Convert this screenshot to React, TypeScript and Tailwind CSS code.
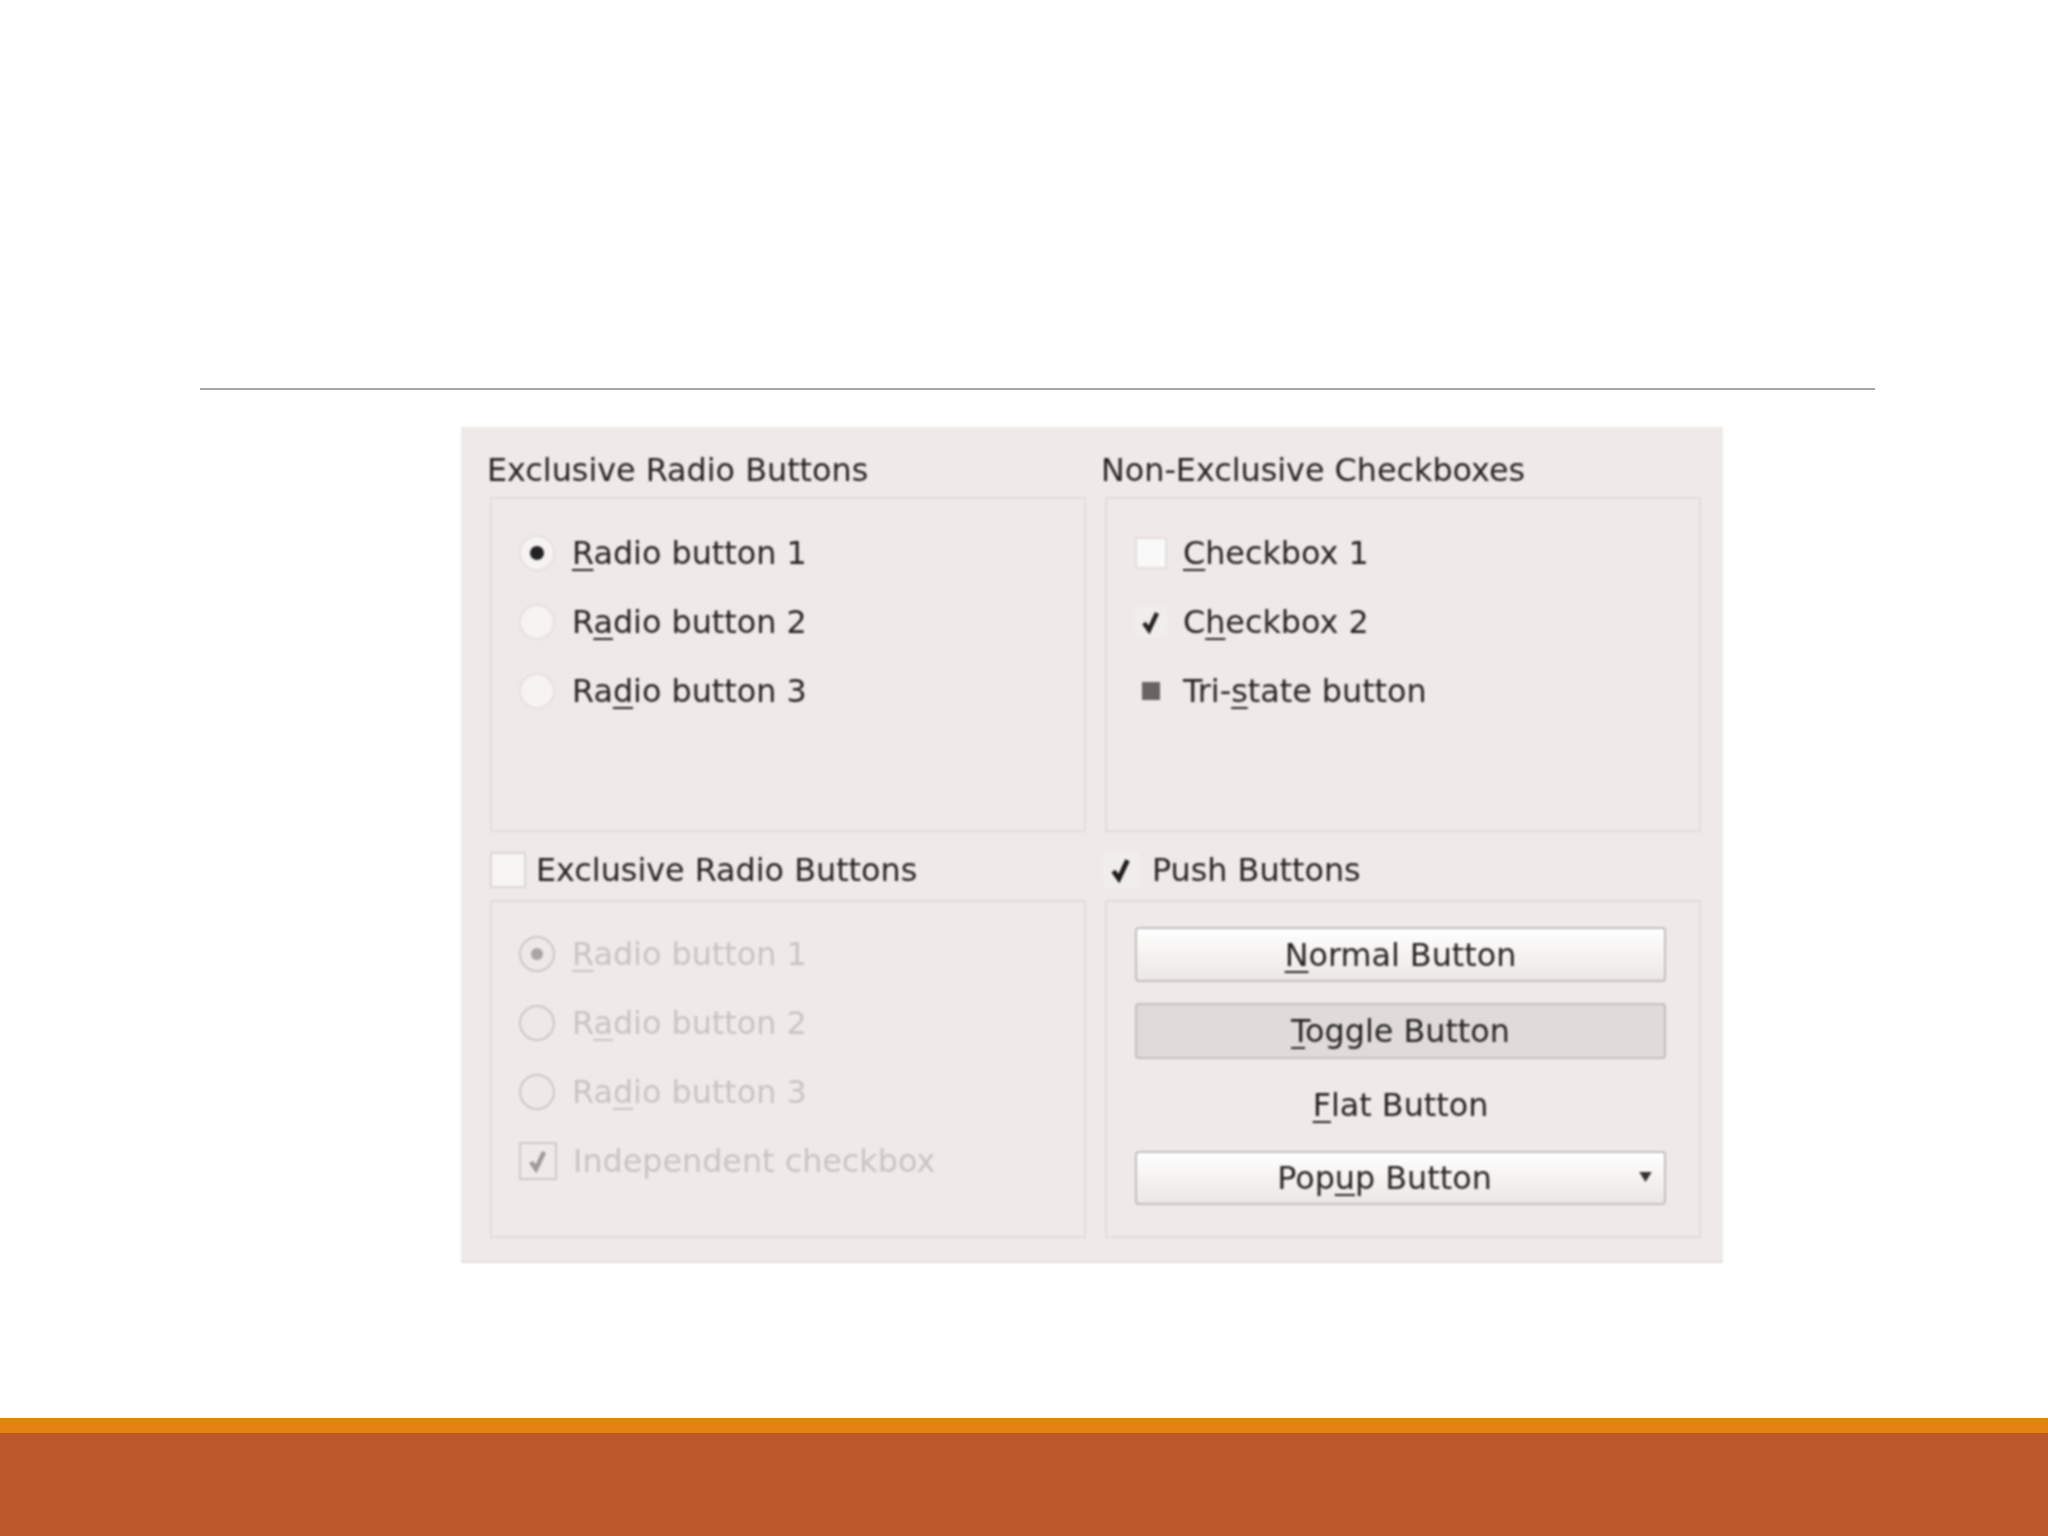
import { ReactNode } from "react";

function CheckMark({ className }: { className: string }) {
  return (
    <svg viewBox="0 0 20 24" className={className}>
      <path d="M3 13 L8 20 L16 3" fill="none" stroke="currentColor" strokeWidth="4.5" />
    </svg>
  );
}

function Radio({ checked, disabled }: { checked?: boolean; disabled?: boolean }) {
  return (
    <span
      className={`flex h-[36px] w-[36px] shrink-0 items-center justify-center rounded-full border-2 ${
        disabled ? "border-[#cdc8c5] bg-[#eee9e6]" : "border-[#e6e2df] bg-[#f6f3f2]"
      }`}
    >
      {checked && (
        <span className={`rounded-full ${disabled ? "h-[12px] w-[12px] bg-[#aaa5a3]" : "h-[14px] w-[14px] bg-[#222]"}`} />
      )}
    </span>
  );
}

function Row({ icon, gap, children }: { icon: ReactNode; gap: string; children: ReactNode }) {
  return (
    <div className={`flex h-[69px] items-center ${gap}`}>
      {icon}
      <span>{children}</span>
    </div>
  );
}

function Key({ children }: { children: string }) {
  return <span className="underline decoration-2 underline-offset-[5px]">{children}</span>;
}

function Frame({ className, children }: { className: string; children: ReactNode }) {
  return <div className={`border-2 border-[#e2dddb] ${className}`}>{children}</div>;
}

function PushButton({ children, className }: { children: ReactNode; className: string }) {
  return (
    <div className={`flex items-center justify-center rounded-[4px] border-2 border-[#c4bfbc] ${className}`}>
      {children}
    </div>
  );
}

export default function App() {
  return (
    <div className="flex h-[1536px] w-full flex-col bg-white font-['DejaVu_Sans',sans-serif]">
      <div className="ml-[200px] mt-[388px] h-[2px] w-[1675px] shrink-0 bg-[#a6a6a6]" />

      {/* Screenshot of the widget gallery */}
      <div className="ml-[461px] mt-[37px] h-[836px] w-[1262px] shrink-0 border-b-2 border-[#e4dfdc] bg-[#efe9e7] pl-[29px] text-[31.8px] leading-none text-[#262323] blur-[1.1px]">
        <div className="grid grid-cols-[596px_596px] gap-x-[19px]">
          {/* top left */}
          <div>
            <div className="-ml-[3px] flex h-[70px] items-center pt-[16px]">Exclusive Radio Buttons</div>
            <Frame className="h-[335px] pl-[27px] pt-[19px]">
              <Row gap="gap-[17px]" icon={<Radio checked />}>
                <Key>R</Key>adio button 1
              </Row>
              <Row gap="gap-[17px]" icon={<Radio />}>
                R<Key>a</Key>dio button 2
              </Row>
              <Row gap="gap-[17px]" icon={<Radio />}>
                Ra<Key>d</Key>io button 3
              </Row>
            </Frame>
          </div>

          {/* top right */}
          <div>
            <div className="-ml-[4px] flex h-[70px] items-center pt-[16px]">Non-Exclusive Checkboxes</div>
            <Frame className="h-[335px] pl-[28px] pt-[19px]">
              <Row gap="gap-[16px]" icon={<span className="h-[32px] w-[32px] shrink-0 border-2 border-[#e2dedb] bg-[#faf9f9]" />}>
                <Key>C</Key>heckbox 1
              </Row>
              <Row
                gap="gap-[16px]"
                icon={
                  <span className="flex h-[32px] w-[32px] shrink-0 items-center justify-center bg-[#f1edeb] text-[#222]">
                    <CheckMark className="h-[24px] w-[20px]" />
                  </span>
                }
              >
                C<Key>h</Key>eckbox 2
              </Row>
              <Row
                gap="gap-[16px]"
                icon={
                  <span className="flex h-[32px] w-[32px] shrink-0 items-center justify-center bg-[#efe9e7]">
                    <span className="h-[18px] w-[18px] bg-[#6b6262]" />
                  </span>
                }
              >
                Tri-<Key>s</Key>tate button
              </Row>
            </Frame>
          </div>

          {/* bottom left */}
          <div>
            <div className="flex h-[68px] items-center gap-[10px] pt-[8px]">
              <span className="h-[36px] w-[36px] shrink-0 border-2 border-[#dcd7d4] bg-[#f8f6f5]" />
              <span>Exclusive Radio Buttons</span>
            </div>
            <Frame className="h-[338px] pl-[27px] pt-[17px] text-[#c9c4c1]">
              <Row gap="gap-[17px]" icon={<Radio checked disabled />}>
                <Key>R</Key>adio button 1
              </Row>
              <Row gap="gap-[17px]" icon={<Radio disabled />}>
                R<Key>a</Key>dio button 2
              </Row>
              <Row gap="gap-[17px]" icon={<Radio disabled />}>
                Ra<Key>d</Key>io button 3
              </Row>
              <Row
                gap="gap-[16px]"
                icon={
                  <span className="flex h-[38px] w-[38px] shrink-0 items-center justify-center border-2 border-[#cfcac7] text-[#9f9a98]">
                    <CheckMark className="h-[24px] w-[20px]" />
                  </span>
                }
              >
                Independent checkbox
              </Row>
            </Frame>
          </div>

          {/* bottom right */}
          <div>
            <div className="-ml-[2px] flex h-[68px] items-center gap-[13px] pt-[8px]">
              <span className="flex h-[36px] w-[36px] shrink-0 items-center justify-center bg-[#f1edeb] text-[#1c1c1c]">
                <CheckMark className="h-[26px] w-[22px]" />
              </span>
              <span>Push Buttons</span>
            </div>
            <Frame className="flex h-[338px] flex-col gap-[21px] pl-[28px] pr-[33px] pt-[25px]">
              <PushButton className="h-[55px] bg-linear-to-b from-white to-[#ebe7e4]">
                <span>
                  <Key>N</Key>ormal Button
                </span>
              </PushButton>
              <PushButton className="h-[56px] bg-[#e0dbd8]">
                <span>
                  <Key>T</Key>oggle Button
                </span>
              </PushButton>
              <div className="flex h-[50px] items-center justify-center">
                <span>
                  <Key>F</Key>lat Button
                </span>
              </div>
              <PushButton className="relative h-[54px] bg-linear-to-b from-white to-[#ebe7e4] pr-[32px]">
                <span>
                  Pop<Key>u</Key>p Button
                </span>
                <svg viewBox="0 0 10 8" className="absolute right-[12px] top-[19px] h-[10px] w-[13px]">
                  <path d="M0 0 H10 L5 8 Z" fill="#333030" />
                </svg>
              </PushButton>
            </Frame>
          </div>
        </div>
      </div>

      <div className="flex-1" />
      <div className="h-[15px] shrink-0 bg-[#e48312]" />
      <div className="h-[103px] shrink-0 bg-[#bd582c]" />
    </div>
  );
}
